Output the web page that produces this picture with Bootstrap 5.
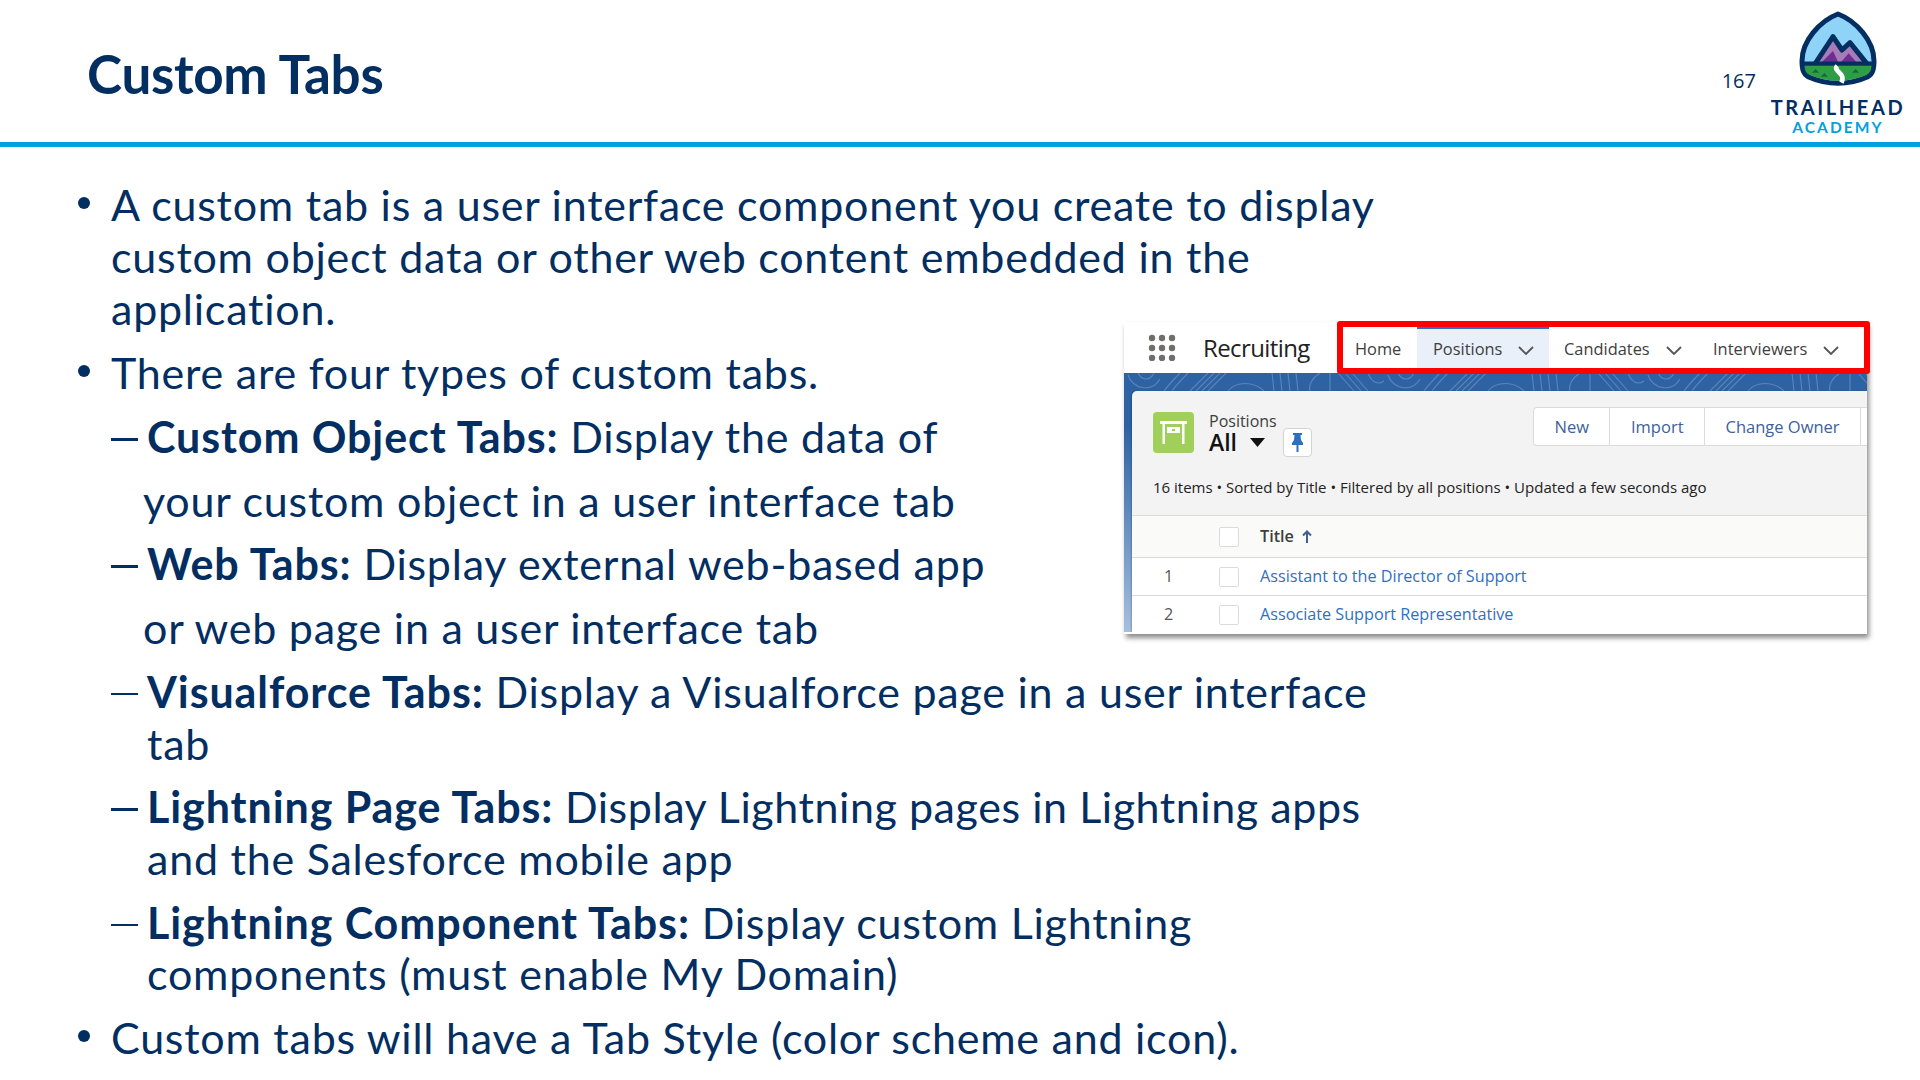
<!DOCTYPE html>
<html lang="en">
<head>
  <meta charset="UTF-8">
  <title>Custom Tabs</title>
  <link href="https://cdn.jsdelivr.net/npm/bootstrap@5.3.0/dist/css/bootstrap.min.css" rel="stylesheet">
  <script src="https://cdn.jsdelivr.net/npm/bootstrap@5.3.0/dist/js/bootstrap.bundle.min.js"></script>
  <style>
html, body{ height: 100%; }
body{
    width: 1920px;
    height: 1080px;
    overflow: hidden;
    background: #fff;
    color: #032e61;
    font-family: "Lato", "Liberation Sans", sans-serif;
}
.slide-head{
    height: 147px;
    border-bottom: 5px solid #00a1e0;
    padding-left: 87px;
    padding-right: 14px;
}
.slide-title{
    font-size: 53px;
    font-weight: 700;
    line-height: 1;
    margin: 4px 0 0;
    letter-spacing: -.3px;
}
.page-num{
    font-size: 20px;
    margin-top: 19px;
    margin-right: 14px;
    font-family: "Open Sans", sans-serif;
}
.logo-box{
    width: 136px;
    text-align: center;
    padding-top: 10px;
}
.logo-box svg{ display: block; margin: 0 auto; }
.logo-top{
    font-size: 20px;
    font-weight: 700;
    letter-spacing: 2.6px;
    line-height: 20px;
    margin-top: 10.500px;
    white-space: nowrap;
}
.logo-sub{
    font-size: 15.5px;
    font-weight: 700;
    letter-spacing: 2.1px;
    line-height: 15px;
    margin-top: 3px;
    color: #00a1e0;
}
.slide-body{
    position: relative;
    padding: 32px 0 0 76px;
    font-size: 43px;
    letter-spacing: .76px;
}
.slide-body b{ letter-spacing: .92px; }
.pt-list, .sub-list{
    list-style: none;
    margin: 0;
    padding: 0;
}
.pt-list > li{
    position: relative;
    padding-left: 35px;
    line-height: 52px;
    margin-bottom: 12px;
}
.pt-list > li::before{
    content: "";
    position: absolute;
    left: 2px;
    top: 18px;
    width: 12px;
    height: 12px;
    border-radius: 50%;
    background: #032e61;
}
.sub-list{ margin-top: 12px; line-height: 51.700px; }
.sub-list > li{
    position: relative;
    padding-left: 36px;
    margin-bottom: 12px;
}
.sub-list > li::before{
    content: "";
    position: absolute;
    left: 0;
    top: 27px;
    width: 27px;
    height: 2.500px;
    background: #032e61;
}
.sub-list > li:last-child{ margin-bottom: 0; }
.cont-line{ display: block; margin-left: -4px; margin-top: 12px; }
.tight-line{ letter-spacing: .56px; }

/* the pasted screenshot */
.shot{
    position: absolute;
    left: 1124px;
    top: 175px;
    width: 743px;
    height: 312px;
    box-shadow: 2px 4px 5px rgba(0,0,0,.45);
    font-family: "Open Sans", sans-serif;
    color: #3e3e3c;
    letter-spacing: 0;
}
.shot b{ letter-spacing: 0; font-weight: 600; }
.shot-bar{
    height: 53px;
    background: #fff;
    border-bottom: 2px solid #2d6fc0;
}
.app-name{ font-size: 24px; color: #222; margin-left: 27px; width: 134px; letter-spacing: -.6px; }
.dot-grid{ margin-left: 24px; }
.tab-box{
    border: 6px solid #f00;
    border-radius: 3px;
    flex: 1;
    height: 53px;
    margin-right: -3px;
    font-size: 16.400px;
    position: relative;
    z-index: 2;
}
.tab-item{ height: 100%; padding-top: 4px; }
.tab-home{ width: 74px; padding-left: 12px; }
.tab-on{
    width: 132px;
    padding-left: 16px;
    padding-top: 2px;
    background: #e9f0fa;
    border-top: 2px solid #2d6fc0;
}
.tab-cand{ width: 149px; padding-left: 15px; }
.tab-int{ padding-left: 15px; }
.tab-item svg{ margin-left: 16px; margin-top: 2px; }
.shot-back{
    position: relative;
    height: 259px;
    padding: 18px 0 0 8px;
    margin-top: -2px;
    background: linear-gradient(#2d62a4, #2d62a4 20%, #a6c0e0);
}
.band-art{ position: absolute; left: 0; top: 0; }
.shot-panel{
    position: relative;
    height: 100%;
    background: #f3f3f3;
    border-radius: 5px 0 0 0;
    box-shadow: -1px 0 2px rgba(0,0,0,.2);
}
.panel-top{ height: 124px; padding: 21px 0 0 21px; position: relative; }
.obj-icon{
    width: 41px;
    height: 41px;
    border-radius: 4px;
    background: #a1cf5b;
}
.obj-label{ font-size: 16px; line-height: 18px; margin-left: 15px; }
.obj-all{ font-size: 23px; font-weight: 600; color: #111; line-height: 24px; }
.caret-mark{ margin-left: 13px; }
.pin-btn{
    width: 29px;
    height: 29px;
    background: #fff;
    border: 1px solid #d4d4d4;
    border-radius: 4px;
    margin-left: 6px;
    margin-top: 16px;
}
.btn-grp{
    position: absolute;
    top: 16px;
    right: 0;
    left: 401px;
    height: 39px;
    background: #fff;
    border: 1px solid #dddbda;
    border-right: 0;
    border-radius: 4px 0 0 4px;
    font-size: 16.500px;
    color: #3d5f9e;
}
.btn-grp > span{ padding: 0 20.500px; border-right: 1px solid #dddbda; line-height: 38px; }
.list-meta{ position: absolute; left: 21px; top: 85px; font-size: 15px; color: #222; white-space: nowrap; }
.grid-row{ border-top: 1px solid #dddbda; height: 38px; background: #fff; font-size: 16.200px; }
.grid-head{ height: 42px; background: #fafaf9; }
.num-cell{ width: 87px; padding-left: 32px; color: #555; }
.chk-box{
    width: 20px;
    height: 20px;
    background: #fff;
    border: 1px solid #dddbda;
    border-radius: 2px;
    margin-right: 21px;
}
.row-link{ color: #2f6fc4; }
  </style>
</head>
<body>
  <header class="slide-head d-flex align-items-center justify-content-between">
    <h1 class="slide-title">Custom Tabs</h1>
    <div class="d-flex align-items-center align-self-stretch">
      <div class="page-num">167</div>
      <div class="logo-box align-self-start">
        <svg width="80" height="76" viewBox="20 12 240 228">
          <path d="M140 24C195 45 248 105 248 165C248 190 244 204 228 213C172 238 108 238 52 213C36 204 32 190 32 165C32 105 85 45 140 24Z" fill="#8fd4f8" stroke="#032e61" stroke-width="15" stroke-linejoin="round"/>
          <path d="M40 178H240C240 195 236 202 224 207C170 230 110 230 56 207C44 202 40 195 40 178Z" fill="#2e9e46"/>
          <path d="M72 172L125 92L152 132L176 110L226 172Z" fill="#a77bb8"/>
          <path d="M88 172L125 135L142 172ZM146 172L172 142L198 172Z" fill="#6f2c91"/>
          <path d="M72 172L125 92L152 132L176 110L226 172" fill="none" stroke="#032e61" stroke-width="15" stroke-linejoin="round"/>
          <path d="M34 173H246" stroke="#032e61" stroke-width="13"/>
          <path d="M138 180C122 196 166 200 150 230" fill="none" stroke="#fff" stroke-width="14"/>
          <path d="M62 200l11-11 11 11zM88 212l11-11 11 11zM182 200l11-11 11 11z" fill="#176b34"/>
        </svg>
        <div class="logo-top">TRAILHEAD</div>
        <div class="logo-sub">ACADEMY</div>
      </div>
    </div>
  </header>
  <main class="slide-body">
    <ul class="pt-list">
      <li>A custom tab is a user interface component you create to display<br>custom object data or other web content embedded in the<br>application.</li>
      <li>There are four types of custom tabs.
        <ul class="sub-list">
          <li><b>Custom Object Tabs:</b> Display the data of<span class="cont-line">your custom object in a user interface tab</span></li>
          <li><b>Web Tabs:</b> Display external web-based app<span class="cont-line">or web page in a user interface tab</span></li>
          <li><b>Visualforce Tabs:</b> Display a Visualforce page in a user interface<br>tab</li>
          <li><span class="tight-line"><b>Lightning Page Tabs:</b> Display Lightning pages in Lightning apps</span><br>and the Salesforce mobile app</li>
          <li><b>Lightning Component Tabs:</b> Display custom Lightning<br>components (must enable My Domain)</li>
        </ul>
      </li>
      <li>Custom tabs will have a Tab Style (color scheme and icon).</li>
    </ul>

    <div class="shot">
      <div class="shot-bar d-flex align-items-center">
        <svg class="dot-grid" width="28" height="27" viewBox="0 0 28 27" fill="#706e6b">
          <circle cx="4" cy="4" r="3.2"/><circle cx="14" cy="4" r="3.2"/><circle cx="24" cy="4" r="3.2"/>
          <circle cx="4" cy="14" r="3.2"/><circle cx="14" cy="14" r="3.2"/><circle cx="24" cy="14" r="3.2"/>
          <circle cx="4" cy="24" r="3.2"/><circle cx="14" cy="24" r="3.2"/><circle cx="24" cy="24" r="3.2"/>
        </svg>
        <span class="app-name">Recruiting</span>
        <div class="tab-box d-flex align-items-center">
          <div class="tab-item tab-home d-flex align-items-center">Home</div>
          <div class="tab-item tab-on d-flex align-items-center">Positions
            <svg width="16" height="9" viewBox="0 0 16 9"><path d="M1 1l7 7 7-7" fill="none" stroke="#555" stroke-width="1.8"/></svg>
          </div>
          <div class="tab-item tab-cand d-flex align-items-center">Candidates
            <svg width="16" height="9" viewBox="0 0 16 9"><path d="M1 1l7 7 7-7" fill="none" stroke="#555" stroke-width="1.8"/></svg>
          </div>
          <div class="tab-item tab-int d-flex align-items-center">Interviewers
            <svg width="16" height="9" viewBox="0 0 16 9"><path d="M1 1l7 7 7-7" fill="none" stroke="#555" stroke-width="1.8"/></svg>
          </div>
        </div>
      </div>
      <div class="shot-back">
        <svg class="band-art" width="743" height="60" viewBox="0 0 743 60">
          <defs>
            <pattern id="topo" width="260" height="60" patternUnits="userSpaceOnUse">
              <g fill="none" stroke="#6c93c4" stroke-width="1.100" opacity=".7">
                <path d="M4 2C8 16 28 20 36 6M14 0C18 8 26 8 30 0"/>
                <path d="M40 18C46 10 52 4 56 0M48 18C54 10 60 4 64 0"/>
                <path d="M66 18L84 0M72 18L90 0M78 18L96 0M84 18L102 0"/>
                <path d="M104 18C112 8 130 8 140 18"/>
                <path d="M148 0L150 18M156 0L158 18M164 0L166 18M172 0L174 18"/>
                <path d="M186 18C184 10 190 4 196 0M206 0V18"/>
                <path d="M214 0L230 18M221 0L237 18M228 0L244 18"/>
                <path d="M244 0C248 10 254 12 260 8"/>
              </g>
            </pattern>
          </defs>
          <rect width="743" height="60" fill="url(#topo)"/>
        </svg>
        <div class="shot-panel">
          <div class="panel-top d-flex align-items-start">
            <div class="obj-icon d-flex align-items-center justify-content-center">
              <svg width="27" height="23" viewBox="0 0 27 23" fill="#fff"><rect width="27" height="3"/><rect x="2.500" y="3" width="2.500" height="20"/><rect x="22" y="3" width="2.500" height="20"/><rect x="7" y="6" width="13" height="6"/><rect x="12" y="8" width="3" height="2" fill="#a1cf5b"/></svg>
            </div>
            <div class="obj-label">Positions
              <div class="obj-all d-flex align-items-center">All
                <svg class="caret-mark" width="15" height="9" viewBox="0 0 15 9"><path d="M0 0H15L7.500 9Z" fill="#111"/></svg>
              </div>
            </div>
            <div class="pin-btn d-flex align-items-center justify-content-center">
              <svg width="11" height="19" viewBox="0 0 11 19" fill="#2d6fc0"><path d="M1 0H10V2H8.500L9 7L11 10V12H6.500V19H4.500V12H0V10L2 7L2.500 2H1Z"/></svg>
            </div>
            <div class="btn-grp d-flex">
              <span>New</span><span>Import</span><span>Change Owner</span>
            </div>
            <div class="list-meta">16 items • Sorted by Title • Filtered by all positions • Updated a few seconds ago</div>
          </div>
          <div class="grid-row grid-head d-flex align-items-center">
            <div class="num-cell"></div><div class="chk-box"></div>
            <b class="d-flex align-items-center gap-2">Title<svg width="10" height="13" viewBox="0 0 10 13"><path d="M5 13V2M1 5.500l4-4 4 4" fill="none" stroke="#3e5f90" stroke-width="2"/></svg></b>
          </div>
          <div class="grid-row d-flex align-items-center">
            <div class="num-cell">1</div><div class="chk-box"></div><span class="row-link">Assistant to the Director of Support</span>
          </div>
          <div class="grid-row d-flex align-items-center">
            <div class="num-cell">2</div><div class="chk-box"></div><span class="row-link">Associate Support Representative</span>
          </div>
        </div>
      </div>
    </div>
  </main>
</body>
</html>
